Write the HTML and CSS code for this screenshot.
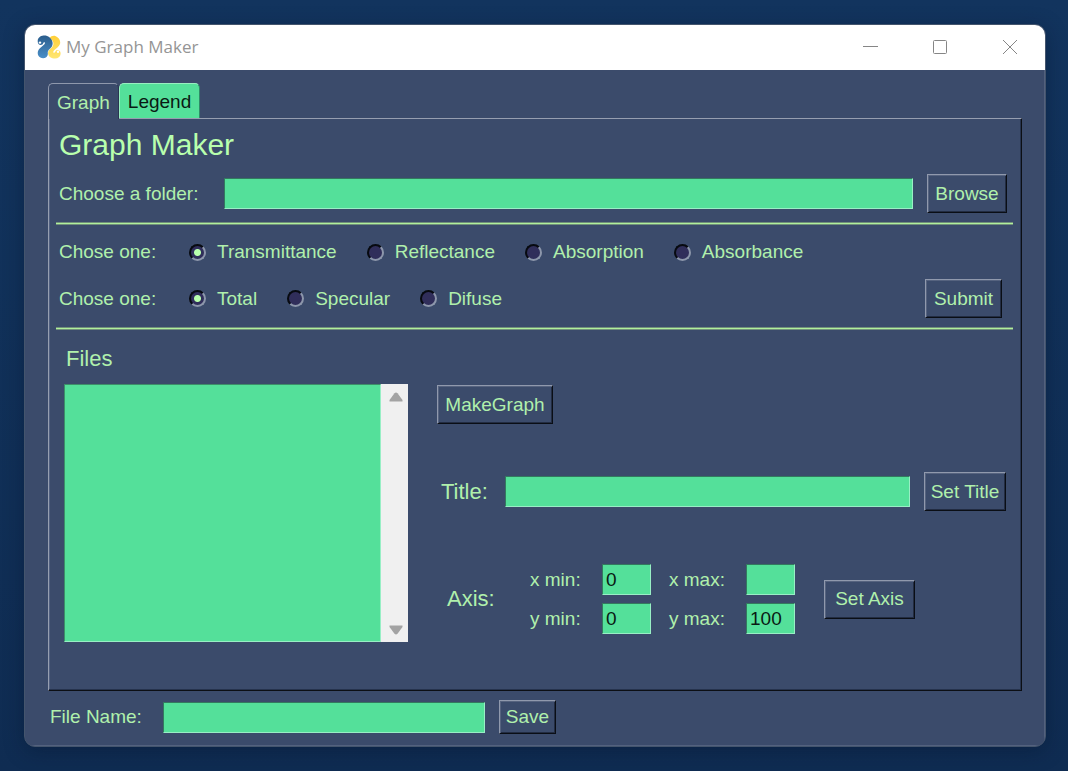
FILE: index.html
```html
<!DOCTYPE html>
<html lang="en">
<head>
<meta charset="utf-8">
<title>My Graph Maker</title>
<link rel="stylesheet" href="styles.css">
</head>
<body>
<div class="window">
  <header class="titlebar">
    <svg class="logo" viewBox="0 0 24 24" aria-hidden="true">
      <defs>
        <linearGradient id="blue" x1="0" y1="0" x2="0" y2="1"><stop offset="0" stop-color="#2b5d8c"/><stop offset="1" stop-color="#4a8fc8"/></linearGradient>
        <linearGradient id="gold" x1="0" y1="0" x2="0" y2="1"><stop offset="0" stop-color="#ffcf38"/><stop offset="1" stop-color="#ffe672"/></linearGradient>
      </defs>
      <path fill="url(#gold)" d="M12.500 3.200C14 1.200 16.200.4 18.300 1c2.400.8 4.700 3.200 4.900 6 .2 2.200-.8 3.700-2.500 5.200l-3.500 3.100c-1 1-1.200 2-.6 2.400.6.400 1.300 0 1.700-.9.500-1.300 1.600-1.900 3-1.600 1.700.4 2.500 1.900 2.300 3.800-.3 2.800-2.600 4.600-5.500 4.600-3.600 0-6.800-2-7-5.300-.1-2 .7-3.100 2.400-4.500 2.200-1.800 3.100-3.200 2.900-5.700-.2-1.900-1.300-3.600-3.900-4.900z"/>
      <path fill="url(#blue)" d="M6.500.6C3.300.9.800 2.900.7 6c-.1 2.300 1.100 3.900 2.900 4.100 1.400.1 2.500-.7 2.700-2 .2-.9.800-1.200 1.300-.8.600.5.400 1.300-.4 2.100l-4.300 3.900C.8 15.300.1 18.200 1.300 20.500c1.500 2.700 5.100 3.600 7.600 2 1.500-1 2.100-2.400 1.900-4.400-.2-1.700.4-2.800 1.900-4.100 2.200-1.900 3.100-3.500 2.900-6.200-.2-2.200-1.300-4.100-3.200-5.500C10.700 1 8.800.4 6.500.6z"/>
      <circle cx="3" cy="7.600" r="1.200" fill="#fff"/>
      <circle cx="21" cy="16.800" r="1.200" fill="#fff"/>
    </svg>
    <span class="caption">My Graph Maker</span>
    <button class="winbtn" aria-label="Minimize"><svg viewBox="0 0 16 16"><path d="M1 7.500h15"/></svg></button>
    <button class="winbtn" aria-label="Maximize"><svg viewBox="0 0 16 16"><rect x="1.500" y="1.500" width="13" height="13" rx="1"/></svg></button>
    <button class="winbtn" aria-label="Close"><svg viewBox="0 0 16 16"><path d="M1 1l14 14M15 1L1 15"/></svg></button>
  </header>

  <main class="client">
    <div class="tabs" role="tablist">
      <button class="tab tab-active" role="tab" aria-selected="true">Graph</button>
      <button class="tab" role="tab" aria-selected="false">Legend</button>
    </div>

    <section class="panel" role="tabpanel">
      <h1 class="heading">Graph Maker</h1>

      <div class="row folder-row">
        <label class="row-label" for="folder">Choose a folder:</label>
        <input class="field grow" id="folder" type="text">
        <button class="btn browse">Browse</button>
      </div>
      <hr class="rule">

      <div class="row kind-row" role="radiogroup" aria-label="Measurement">
        <span class="group-label">Chose one:</span>
        <label class="option"><input class="radio" type="radio" name="kind" checked>Transmittance</label>
        <label class="option"><input class="radio" type="radio" name="kind">Reflectance</label>
        <label class="option"><input class="radio" type="radio" name="kind">Absorption</label>
        <label class="option"><input class="radio" type="radio" name="kind">Absorbance</label>
      </div>
      <div class="row mode-row" role="radiogroup" aria-label="Mode">
        <span class="group-label">Chose one:</span>
        <label class="option"><input class="radio" type="radio" name="mode" checked>Total</label>
        <label class="option"><input class="radio" type="radio" name="mode">Specular</label>
        <label class="option"><input class="radio" type="radio" name="mode">Difuse</label>
        <button class="btn submit">Submit</button>
      </div>
      <hr class="rule">

      <div class="columns">
        <div class="files">
          <label class="files-label" for="files">Files</label>
          <div class="listbox">
            <select class="list" id="files" multiple></select>
            <div class="scroll" aria-hidden="true">
              <svg viewBox="0 0 14 10"><path d="M.5 9.500V8L5.500 1.200Q7-.4 8.500 1.200L13.500 8V9.500z"/></svg>
              <svg viewBox="0 0 14 10"><path d="M.5.5V2L5.500 8.800Q7 10.400 8.500 8.800L13.500 2V.5z"/></svg>
            </div>
          </div>
        </div>

        <div class="settings">
          <button class="btn make">MakeGraph</button>
          <div class="title-row">
            <label class="big-label" for="title">Title:</label>
            <input class="field grow" id="title" type="text">
            <button class="btn set-title">Set Title</button>
          </div>
          <div class="axis-row">
            <span class="axis-label">Axis:</span>
            <div class="axis-grid">
              <label for="xmin">x min:</label><input class="field" id="xmin" type="text" value="0">
              <label class="max" for="xmax">x max:</label><input class="field" id="xmax" type="text">
              <label for="ymin">y min:</label><input class="field" id="ymin" type="text" value="0">
              <label class="max" for="ymax">y max:</label><input class="field" id="ymax" type="text" value="100">
            </div>
            <button class="btn set-axis">Set Axis</button>
          </div>
        </div>
      </div>
    </section>

    <div class="save-row">
      <label class="save-label" for="filename">File Name:</label>
      <input class="field filename" id="filename" type="text">
      <button class="btn save">Save</button>
    </div>
  </main>
</div>
</body>
</html>
```
FILE: styles.css
```css
* { box-sizing: border-box; }

body {
  margin: 0;
  min-height: 100vh;
  padding: 24px 22px 24px 24px;
  background: linear-gradient(#12345e, #0f2c52);
  font-family: "Liberation Sans", Arial, sans-serif;
  font-size: 19px;
  line-height: 24px;
  color: #b0f0ac;
}

button, input, select { font: inherit; color: inherit; margin: 0; }

.window {
  border: 1px solid #44556d;
  border-radius: 11px;
  background: #3b4b6b;
  box-shadow: 0 4px 20px rgba(6, 18, 40, 0.35);
  overflow: hidden;
}

.titlebar {
  display: flex;
  align-items: center;
  height: 45px;
  padding: 0 0 2px 12px;
  background: #fff;
}
.logo { width: 24px; height: 24px; }
.caption {
  flex: 1;
  padding-left: 5px;
  font-family: "Open Sans", "Noto Sans", sans-serif;
  font-size: 17px;
  color: #959595;
}
.winbtn {
  width: 70px;
  height: 43px;
  padding: 0;
  border: 0;
  background: none;
}
.winbtn svg {
  display: block;
  width: 16px;
  height: 16px;
  margin: 0 auto;
  fill: none;
  stroke: #868686;
  stroke-width: 1;
}

.client {
  padding: 13px 22px 11px 23px;
  border: solid #53617e;
  border-width: 0 1px 1px 0;
}

.tabs { display: flex; align-items: flex-end; }
.tab {
  height: 35px;
  padding: 2px 8px 0;
  border: 1px solid #98efc0;
  border-right-color: #2f8a68;
  border-bottom: 0;
  border-radius: 5px 5px 0 0;
  background: #54e09a;
  color: #0a1a14;
}
.tab-active {
  position: relative;
  height: 36px;
  margin-bottom: -1px;
  border-color: #8f98ac;
  border-right-color: #2a3552;
  background: #3b4b6b;
  color: #b0f0ac;
}

.panel {
  padding: 6px 8px 48px 7px;
  border: 1px solid;
  border-color: #969eb0 #0c0f14 #0c0f14 #969eb0;
  box-shadow: inset -1px -1px #26334d, inset 1px 0 #536181;
}
.heading {
  margin: 0;
  padding-left: 3px;
  font-size: 30px;
  font-weight: 400;
  line-height: 40px;
  color: #b8ffad;
}

.row { display: flex; align-items: center; padding-left: 3px; }
.grow { flex: 1; min-width: 0; }

.field {
  height: 31px;
  padding: 0 3px;
  border: 1px solid;
  border-color: #34795f #98efc5 #98efc5 #34795f;
  border-radius: 0;
  background: #54e09a;
  color: #0a1a14;
}
.btn {
  height: 39px;
  padding: 0;
  border: 1px solid;
  border-color: #9099ad #0a0e15 #0a0e15 #9099ad;
  border-radius: 0;
  background: #3b4b6b;
  box-shadow: inset 1px 1px #56637f, inset -1px -1px #222c42;
  white-space: nowrap;
}

.rule {
  height: 3px;
  margin: 9px 0 0;
  border: solid #72917b;
  border-width: 1px 0;
  background: #b0f09c;
}

.folder-row { margin-top: 9px; padding-right: 6px; }
.row-label { width: 165px; }
.browse { width: 80px; margin-left: 14px; }

.kind-row { margin-top: 15px; }
.mode-row { margin-top: 15px; padding-right: 11px; }
.group-label { width: 130px; }
.option { display: flex; align-items: center; gap: 11px; margin-right: 30px; }
.radio {
  appearance: none;
  width: 17px;
  height: 17px;
  border: 2px solid;
  border-color: #070a10 #8d97ab #8d97ab #070a10;
  border-radius: 50%;
  background: #302e5a;
}
.radio:checked { background: radial-gradient(circle, #b8ffad 3px, #302e5a 4px); }
.submit { width: 77px; margin-left: auto; }

.columns { display: flex; gap: 29px; margin-top: 15px; padding: 0 7px 0 8px; }
.files { width: 344px; }
.files-label {
  display: block;
  padding-left: 2px;
  font-size: 22px;
  line-height: 28px;
}
.listbox { display: flex; height: 258px; margin-top: 11px; }
.list {
  flex: 1;
  min-width: 0;
  border: 1px solid;
  border-color: #3d8f69 #98efc5 #98efc5 #3d8f69;
  border-radius: 0;
  background: #54e09a;
  overflow: hidden;
}
.scroll {
  display: flex;
  flex-direction: column;
  justify-content: space-between;
  align-items: center;
  width: 27px;
  padding: 8px 0 7px 2px;
  background: #f0f0f0;
}
.scroll svg { width: 14px; height: 10px; fill: #a3a3a3; }

.settings { flex: 1; min-width: 0; padding-top: 40px; }
.make { display: block; width: 116px; }
.title-row { display: flex; align-items: center; margin-top: 48px; padding-left: 4px; }
.big-label { width: 64px; font-size: 22px; }
.set-title { width: 82px; margin-left: 14px; }
.axis-row { display: flex; align-items: center; margin-top: 53px; padding-left: 10px; }
.axis-label { width: 83px; font-size: 22px; }
.axis-grid {
  display: grid;
  grid-template-columns: 72px 49px 95px 49px;
  row-gap: 8px;
  align-items: center;
}
.axis-grid .field { width: 49px; }
.max { padding-left: 18px; }
.set-axis { width: 91px; margin-left: 29px; }

.save-row { display: flex; align-items: center; margin-top: 9px; padding-left: 2px; }
.save-label { width: 113px; }
.filename { width: 322px; }
.save { width: 57px; height: 34px; margin-left: 14px; }
```
